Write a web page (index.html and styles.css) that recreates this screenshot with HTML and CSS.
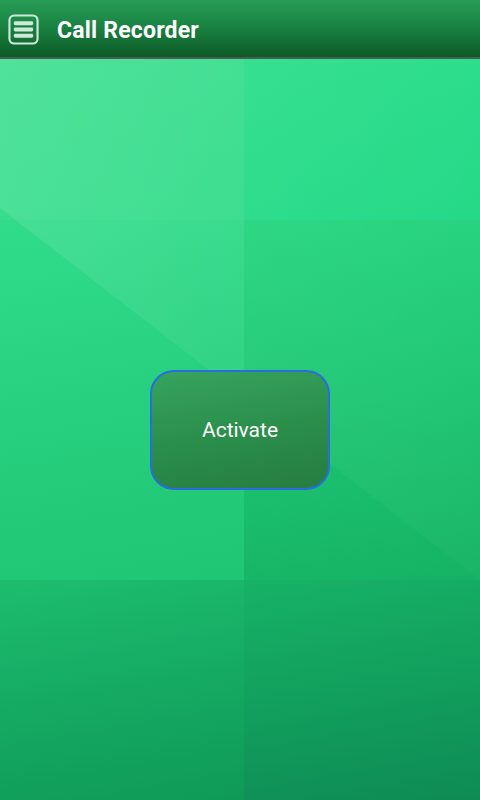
FILE: index.html
```html
<!DOCTYPE html>
<html>
<head>
<meta charset="utf-8">
<link rel="stylesheet" href="styles.css">
</head>
<body>
<div class="app">
  <header class="bar">
    <svg class="menu" width="31" height="31" viewBox="0 0 32 32">
      <rect x="1.5" y="1.5" width="29" height="29" rx="5" fill="none" stroke="#cfe9d9" stroke-width="2.2"/>
      <rect x="6" y="7.5" width="20" height="4" rx="1.5" fill="#cfe9d9"/>
      <rect x="6" y="14" width="20" height="4" rx="1.5" fill="#cfe9d9"/>
      <rect x="6" y="20.5" width="20" height="4" rx="1.5" fill="#cfe9d9"/>
    </svg>
    <h1 class="title">Call Recorder</h1>
  </header>
  <main class="content">
    <div class="tiles">
      <div class="tile t1"></div>
      <div class="tile t2"></div>
      <div class="tile t3"></div>
      <div class="tile t4"></div>
      <div class="tile t5"></div>
      <div class="tile t6"></div>
    </div>
    <div class="shine"></div>
    <button class="activate">Activate</button>
  </main>
</div>
</body>
</html>
```
FILE: styles.css
```css
html, body {
  margin: 0;
  padding: 0;
  width: 480px;
  height: 800px;
  overflow: hidden;
  font-family: Roboto, "Liberation Sans", sans-serif;
}
.app {
  display: flex;
  flex-direction: column;
  height: 800px;
}
.bar {
  height: 57px;
  flex: 0 0 57px;
  display: flex;
  align-items: center;
  padding-left: 8px;
  background: linear-gradient(to bottom, #289d58 0%, #1a8443 45%, #0c5a26 100%);
  border-bottom: 2px solid #4e5a52;
}
.menu {
  display: block;
  margin-top: 2px;
}
.title {
  margin: 3px 0 0 18px;
  font-size: 23px;
  font-weight: 700;
  color: #ffffff;
  letter-spacing: 0.2px;
}
.content {
  position: relative;
  flex: 1;
  display: flex;
  align-items: center;
  justify-content: center;
  overflow: hidden;
}
.tiles {
  position: absolute;
  inset: 0;
  display: grid;
  grid-template-columns: 244px 1fr;
  grid-template-rows: 161px 360px 1fr;
}
.t1 { background: linear-gradient(160deg, #3ade8e 0%, #33dc8a 100%); }
.t2 { background: linear-gradient(160deg, #2ade8a 0%, #1fd884 100%); }
.t3 { background: linear-gradient(170deg, #30dc8a 0%, #27d07e 50%, #1fc674 100%); }
.t4 { background: linear-gradient(170deg, #23d57e 0%, #1cc672 50%, #16b264 100%); }
.t5 { background: linear-gradient(170deg, #1dbd6e 0%, #15aa62 50%, #0f9a58 100%); }
.t6 { background: linear-gradient(170deg, #17b266 0%, #119d5c 55%, #0e8b54 100%); }
.shine {
  position: absolute;
  inset: 0;
  clip-path: polygon(0 0, 100% 0, 100% 521px, 0 149px);
  background: linear-gradient(100deg, rgba(255,255,255,0.11) 0%, rgba(255,255,255,0.05) 45%, rgba(255,255,255,0.015) 100%);
}
.activate {
  position: relative;
  width: 180px;
  height: 120px;
  border: 2px solid #2b6be3;
  border-radius: 24px;
  background: linear-gradient(170deg, #36a45e 0%, #2b8f4c 50%, #257d40 100%);
  color: #ffffff;
  font-family: Roboto, "Liberation Sans", sans-serif;
  font-size: 21px;
  padding: 0;
  margin-top: 1px;
}
```
